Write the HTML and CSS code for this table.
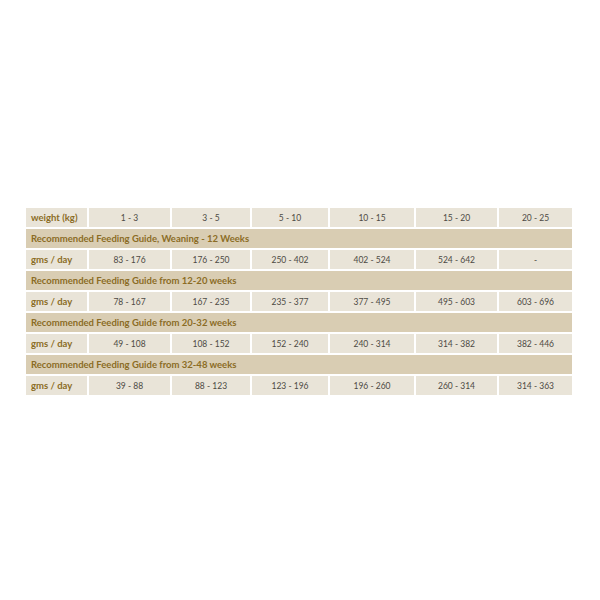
FILE: index.html
```html
<!DOCTYPE html>
<html>
<head>
<meta charset="utf-8">
<link rel="stylesheet" href="styles.css">
</head>
<body>
<div class="guide">
  <div class="label">weight (kg)</div>
  <div class="num">1 - 3</div><div class="num">3 - 5</div><div class="num">5 - 10</div><div class="num">10 - 15</div><div class="num">15 - 20</div><div class="num">20 - 25</div>
  <div class="section">Recommended Feeding Guide, Weaning - 12 Weeks</div>
  <div class="label">gms / day</div>
  <div class="num">83 - 176</div><div class="num">176 - 250</div><div class="num">250 - 402</div><div class="num">402 - 524</div><div class="num">524 - 642</div><div class="num">-</div>
  <div class="section">Recommended Feeding Guide from 12-20 weeks</div>
  <div class="label">gms / day</div>
  <div class="num">78 - 167</div><div class="num">167 - 235</div><div class="num">235 - 377</div><div class="num">377 - 495</div><div class="num">495 - 603</div><div class="num">603 - 696</div>
  <div class="section">Recommended Feeding Guide from 20-32 weeks</div>
  <div class="label">gms / day</div>
  <div class="num">49 - 108</div><div class="num">108 - 152</div><div class="num">152 - 240</div><div class="num">240 - 314</div><div class="num">314 - 382</div><div class="num">382 - 446</div>
  <div class="section">Recommended Feeding Guide from 32-48 weeks</div>
  <div class="label">gms / day</div>
  <div class="num">39 - 88</div><div class="num">88 - 123</div><div class="num">123 - 196</div><div class="num">196 - 260</div><div class="num">260 - 314</div><div class="num">314 - 363</div>
</div>
</body>
</html>
```
FILE: styles.css
```css
html, body {
  margin: 0;
  padding: 0;
  background: #ffffff;
}
.guide {
  margin: 208px 0 0 26px;
  width: 546px;
  display: grid;
  grid-template-columns: 61px 81px 78px 76px 84px 81px 73px;
  grid-auto-rows: 19px;
  gap: 2px;
  font-family: "Lato", "Open Sans", sans-serif;
}
.guide > div {
  display: flex;
  align-items: center;
  background: #e9e4d8;
}
.label {
  padding-left: 5px;
  font-size: 9.5px;
  font-weight: 700;
  color: #8b6c25;
}
.num {
  justify-content: center;
  font-size: 8.5px;
  color: #4d4a44;
}
.section {
  grid-column: 1 / -1;
  padding-left: 5px;
  background: #d9cdb3 !important;
  font-size: 9.5px;
  font-weight: 700;
  color: #8b6c25;
}
```
